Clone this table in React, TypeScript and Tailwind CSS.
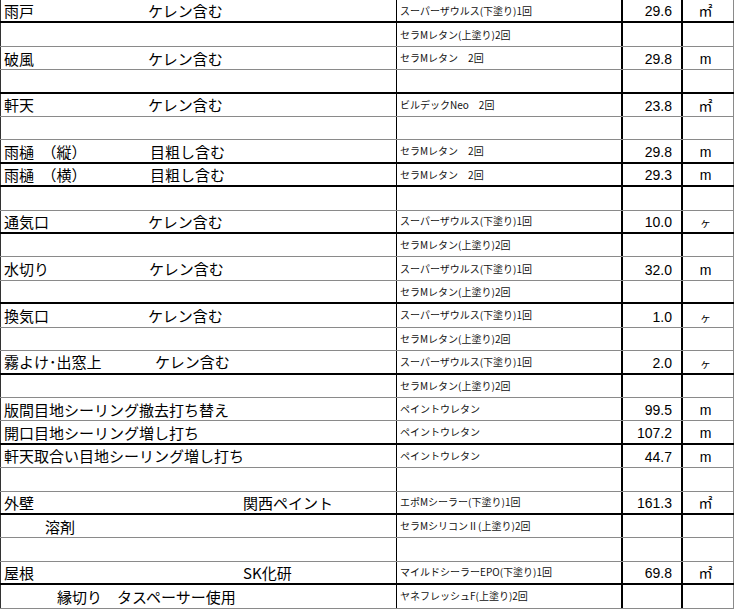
import React from "react";

type Row = {
  a?: React.ReactNode;
  b?: string;
  n?: string;
  u?: string;
  thick?: boolean;
};

const K = "ケレン含む";

const rows: Row[] = [
  { a: <><span className="w-[144px] shrink-0">雨戸</span><span>{K}</span></>, b: "スーパーザウルス(下塗り)1回", n: "29.6", u: "㎡", thick: true },
  { b: "セラMレタン(上塗り)2回" },
  { a: <><span className="w-[144px] shrink-0">破風</span><span>{K}</span></>, b: "セラMレタン　2回", n: "29.8", u: "m" },
  { thick: true },
  { a: <><span className="w-[144px] shrink-0">軒天</span><span>{K}</span></>, b: "ビルデックNeo　2回", n: "23.8", u: "㎡" },
  {},
  { a: <><span className="w-[146px] shrink-0">雨樋　（縦）</span><span>目粗し含む</span></>, b: "セラMレタン　2回", n: "29.8", u: "m", thick: true },
  { a: <><span className="w-[146px] shrink-0">雨樋　（横）</span><span>目粗し含む</span></>, b: "セラMレタン　2回", n: "29.3", u: "m", thick: true },
  {},
  { a: <><span className="w-[144px] shrink-0">通気口</span><span>{K}</span></>, b: "スーパーザウルス(下塗り)1回", n: "10.0", u: "ヶ", thick: true },
  { b: "セラMレタン(上塗り)2回" },
  { a: <><span className="w-[145px] shrink-0">水切り</span><span>{K}</span></>, b: "スーパーザウルス(下塗り)1回", n: "32.0", u: "m" },
  { b: "セラMレタン(上塗り)2回", thick: true },
  { a: <><span className="w-[144px] shrink-0">換気口</span><span>{K}</span></>, b: "スーパーザウルス(下塗り)1回", n: "1.0", u: "ヶ" },
  { b: "セラMレタン(上塗り)2回" },
  { a: <><span className="w-[151px] shrink-0">霧よけ･出窓上</span><span>{K}</span></>, b: "スーパーザウルス(下塗り)1回", n: "2.0", u: "ヶ", thick: true },
  { b: "セラMレタン(上塗り)2回" },
  { a: <span>版間目地シーリング撤去打ち替え</span>, b: "ペイントウレタン", n: "99.5", u: "m" },
  { a: <span>開口目地シーリング増し打ち</span>, b: "ペイントウレタン", n: "107.2", u: "m", thick: true },
  { a: <span>軒天取合い目地シーリング増し打ち</span>, b: "ペイントウレタン", n: "44.7", u: "m" },
  {},
  { a: <><span className="w-[239px] shrink-0">外壁</span><span>関西ペイント</span></>, b: "エポMシーラー(下塗り)1回", n: "161.3", u: "㎡", thick: true },
  { a: <span className="pl-[41px]">溶剤</span>, b: "セラMシリコンⅡ(上塗り)2回" },
  {},
  { a: <><span className="w-[239px] shrink-0">屋根</span><span>SK化研</span></>, b: "マイルドシーラーEPO(下塗り)1回", n: "69.8", u: "㎡", thick: true },
  { a: <span className="pl-[53px]">縁切り　タスペーサー使用</span>, b: "ヤネフレッシュF(上塗り)2回" },
];

export default function App() {
  return (
    <div className="w-[735px] h-[611px] bg-white overflow-hidden text-black font-['Noto_Sans_CJK_JP',sans-serif]">
      <div className="flex flex-col w-[734px]">
        {rows.map((r, i) => (
          <div
            key={i}
            className={
              r.thick
                ? "flex h-[23.42px] border-b-2 border-black"
                : "flex h-[23.42px] border-b border-[#8a8a8a]"
            }
          >
            <div className="w-[397px] shrink-0 flex items-center pl-[3px] border-l border-r border-l-[#333] border-r-black text-[15px] leading-none whitespace-nowrap">
              {r.a}
            </div>
            <div className="w-[226px] shrink-0 flex items-center pl-[3px] border-r-2 border-black text-[10px] leading-none whitespace-nowrap text-[#111]">
              {r.b}
            </div>
            <div className="w-[60px] shrink-0 flex items-end justify-end pr-[9px] pb-[2px] border-r-2 border-black text-[14px] leading-[16px] font-['Liberation_Sans',sans-serif]">
              {r.n}
            </div>
            <div className="w-[51px] shrink-0 flex items-end justify-center pr-[5px] pb-[2px] border-r border-[#8a8a8a] text-[14px] leading-[16px] font-['Liberation_Sans','Noto_Sans_CJK_JP',sans-serif]">
              {r.u === "ヶ" ? <span className="text-[11px] leading-[14px]">{r.u}</span> : r.u}
            </div>
          </div>
        ))}
      </div>
    </div>
  );
}
